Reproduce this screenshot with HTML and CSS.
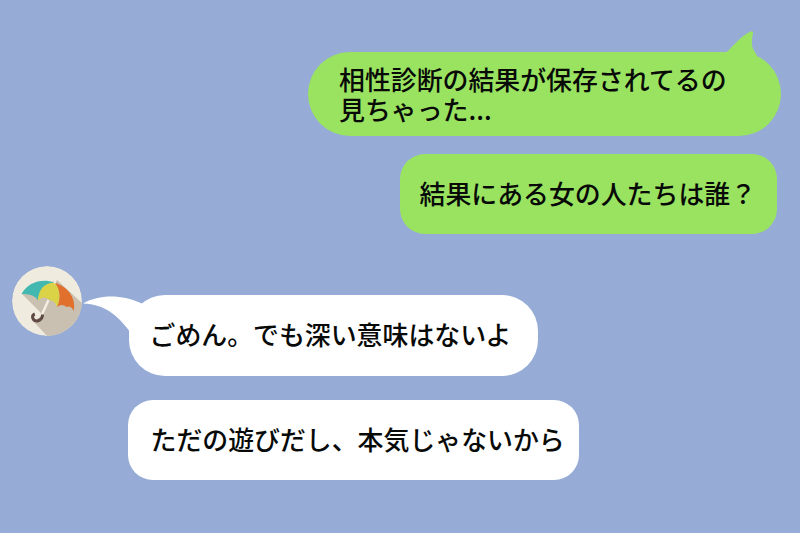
FILE: index.html
```html
<!DOCTYPE html>
<html lang="ja">
<head>
    <meta charset="UTF-8">
    <meta name="viewport" content="width=device-width, initial-scale=1.0">
    <title>トーク</title>
    <link rel="stylesheet" href="styles.css">
</head>
<body>
    <main class="chat">
        <div class="message sent first">
            <p class="bubble round">相性診断の結果が保存されてるの<br>見ちゃった...</p>
            <svg class="tail tail-sent" width="34" height="32" viewBox="0 0 34 32">
                <path d="M0 22.5C9 15 15 5 25.500 1.200Q27.500 .8 27 3C25.500 12 25 17 29 22L34 32H0Z" fill="#9ae361"/>
            </svg>
        </div>
        <div class="message sent">
            <p class="bubble">結果にある女の人たちは誰？</p>
        </div>
        <div class="message received">
            <svg class="avatar" width="70" height="70" viewBox="0 0 70 70">
                <clipPath id="circle"><circle cx="35" cy="35" r="35"/></clipPath>
                <g clip-path="url(#circle)">
                    <circle cx="35" cy="35" r="35" fill="#efecdf"/>
                    <path d="M10 28L28 46 30 50 21 55 36 71H71V38L45 14Z" fill="#c9c0b1"/>
                    <path d="M36.500 34L29.500 49.500" stroke="#f4efe2" stroke-width="2.4"/>
                    <path d="M30.500 48.500C30.500 55 22.500 57.500 20.700 52Q20 49 22.800 48" fill="none" stroke="#5e4945" stroke-width="3"/>
                    <path d="M9.500 28C16 16 30 12 42.500 16.500C32 18 27 25 26 34.500Q22 27 9.500 28Z" fill="#43b8b0"/>
                    <path d="M42.500 16.500C32 17 26.500 23 26 34.500Q31.500 29 36.500 33.500Q43 34 45 41C49 33 48.500 23 42.500 16.500Z" fill="#dbd347"/>
                    <path d="M42.500 16.500C54 20 65 31 61.700 45Q59 39 54.500 41Q50 37 45 41C49 33 48.500 23 42.500 16.500Z" fill="#e0702b"/>
                    <path d="M42.500 17.500L43.800 14" stroke="#f4efe2" stroke-width="2"/>
                </g>
            </svg>
            <svg class="tail tail-received" width="62" height="40" viewBox="0 0 62 40">
                <path d="M0 8.500C18-1.500 40 0 59 8.500L62 38H47L46 35.500C35 21 22 9 0 8.500Z" fill="#fff"/>
            </svg>
            <p class="bubble round">ごめん。でも深い意味はないよ</p>
        </div>
        <div class="message received last">
            <p class="bubble">ただの遊びだし、本気じゃないから</p>
        </div>
    </main>
</body>
</html>
```
FILE: styles.css
```css
* {
    box-sizing: border-box;
}
body {
    margin: 0;
    background: #96acd6;
    color: #080a08;
    font-family: "Noto Sans CJK JP", sans-serif;
    font-size: 25.9px;
    font-weight: 500;
    line-height: 30px;
}
.chat {
    display: flex;
    flex-direction: column;
    height: 533px;
    overflow: hidden;
    padding-top: 52px;
}
.message {
    position: relative;
    display: flex;
}
.sent {
    justify-content: flex-end;
    margin-top: 18.5px;
    padding-right: 23.5px;
}
.sent.first {
    margin-top: 0;
    padding-right: 19px;
}
.received {
    margin-top: 32px;
    padding-left: 12px;
}
.received.last {
    margin-top: 24px;
    padding-left: 127.5px;
}
.bubble {
    display: flex;
    align-items: center;
    width: 376.5px;
    height: 80px;
    margin: 0;
    padding-left: 19.5px;
    padding-bottom: 2px;
    border-radius: 25px;
    background: #9ae361;
    white-space: nowrap;
}
.first .bubble {
    display: block;
    width: 473px;
    height: 83.5px;
    padding: 12px 0 0 31px;
    border-radius: 42px;
}
.received .bubble {
    width: 451.5px;
    padding-left: 23px;
    background: #fff;
}
.received .bubble.round {
    width: 409.5px;
    height: 80.5px;
    margin: 29px 0 0 46.5px;
    padding-left: 21px;
    border-radius: 36px;
}
.avatar {
    flex: none;
}
.tail {
    position: absolute;
}
.tail-sent {
    top: -22px;
    right: 40px;
}
.tail-received {
    top: 29px;
    left: 83px;
}
```
